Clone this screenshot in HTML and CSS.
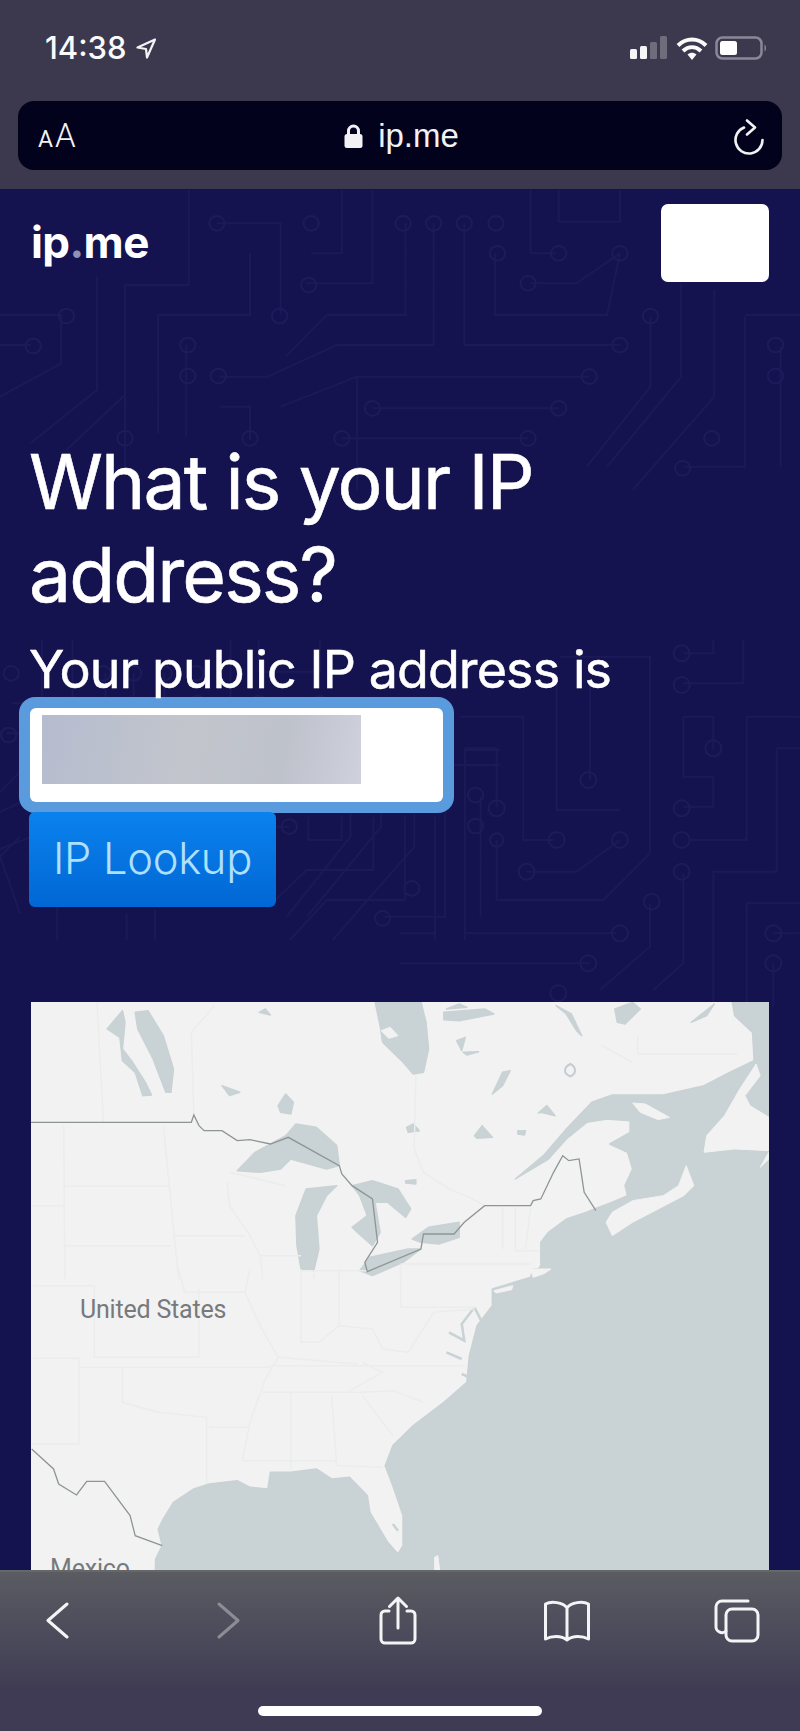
FILE: index.html
```html
<!DOCTYPE html>
<html lang="en">
<head>
<meta charset="utf-8">
<title>ip.me</title>
<link rel="stylesheet" href="styles.css">
</head>
<body>
<div class="phone">
  <header class="chrome">
    <div class="status">
      <div class="clock"><span>14:38</span>
        <svg class="loc" width="20" height="21" viewBox="0 0 20 21"><path d="M19 1.500 1.500 9.500 10 11 11 19.500Z"/></svg>
      </div>
      <div class="indicators">
        <svg width="38" height="24" viewBox="0 0 38 24"><rect class="bar-on" x="0" y="13" width="7" height="10" rx="1.500"/><rect class="bar-on" x="10" y="10" width="7" height="13" rx="1.500"/><rect class="bar-off" x="20" y="6" width="7" height="17" rx="1.500"/><rect class="bar-off" x="30" y="0" width="7" height="23" rx="1.500"/></svg>
        <svg width="32" height="25" viewBox="0 0 32 25"><path class="wifi" d="M2 9.500C10 1.500 22 1.500 30 9.500"/><path class="wifi" d="M7 15C12.500 10 19.500 10 25 15"/><path class="wifi-dot" d="M11.500 18.500C14.500 16 17.500 16 20.500 18.500L16 24Z"/></svg>
        <svg width="52" height="24" viewBox="0 0 52 24"><rect class="batt" x="1.500" y="1.500" width="45" height="21" rx="6"/><rect class="batt-fill" x="5" y="5" width="17" height="14" rx="2.500"/><path class="batt-cap" d="M49.500 8.500C51.500 9.500 51.500 14.500 49.500 15.500Z"/></svg>
      </div>
    </div>
    <div class="urlbar">
      <div class="aa"><span class="aa-small">A</span><span class="aa-big">A</span></div>
      <div class="address">
        <svg width="19" height="24" viewBox="0 0 19 24"><path class="lock-shackle" d="M4.500 11V7A5 5 0 0 1 14.500 7V11"/><rect class="lock-body" x="0.500" y="10" width="18" height="14" rx="2.500"/></svg>
        <span>ip.me</span>
      </div>
      <svg class="reload" width="32" height="36" viewBox="0 0 32 36"><path d="M11 8.500A13.500 13.500 0 1 0 29.500 21"/><path d="M14 1.500 22 8.500 14 15.500"/></svg>
    </div>
  </header>

  <main class="page">
    <svg class="circuit" width="800" height="1381" viewBox="0 189 800 1381" aria-hidden="true">
      <defs>
        <g id="tile" transform="translate(0 190) scale(.5102 .3333)">
          <path class="trace" d="M245 850V285H370V0M310 730V375H490V190M425 100H550V375M610 190H670V0M600 280H730V0M640 375H795V100M525 560H430M525 560 660 465H850V100M640 375 560 500M910 100V465H1215M970 190V375H1190L1215 190M1040 280H1130L1215 190M1090 190H1040V0M1095 0V95H1215V0M700 560H1155M550 650 700 560V900M730 655H1095M670 745H1035M1150 830 1275 590V380M1335 280V560L1190 830M1400 300V620L1240 900M1460 380V830H1340M1460 375H1568M1530 470V830M0 375H120V520L0 620M60 465H0M190 260V600L60 760M365 465V740M245 615 130 780M430 650H490V750"/>
          <g class="pad">
            <ellipse cx="425" cy="100" rx="15" ry="22"/><ellipse cx="610" cy="100" rx="15" ry="22"/><ellipse cx="790" cy="100" rx="15" ry="22"/><ellipse cx="850" cy="100" rx="15" ry="22"/><ellipse cx="910" cy="100" rx="15" ry="22"/><ellipse cx="972" cy="100" rx="15" ry="22"/><ellipse cx="975" cy="190" rx="15" ry="22"/><ellipse cx="1095" cy="190" rx="15" ry="22"/><ellipse cx="1215" cy="190" rx="15" ry="22"/><ellipse cx="1035" cy="280" rx="15" ry="22"/><ellipse cx="605" cy="285" rx="15" ry="22"/><ellipse cx="548" cy="378" rx="15" ry="22"/><ellipse cx="130" cy="378" rx="15" ry="22"/><ellipse cx="65" cy="468" rx="15" ry="22"/><ellipse cx="368" cy="465" rx="15" ry="22"/><ellipse cx="368" cy="558" rx="15" ry="22"/><ellipse cx="428" cy="558" rx="15" ry="22"/><ellipse cx="1215" cy="465" rx="15" ry="22"/><ellipse cx="1275" cy="378" rx="15" ry="22"/><ellipse cx="1155" cy="560" rx="15" ry="22"/><ellipse cx="1520" cy="465" rx="15" ry="22"/><ellipse cx="1520" cy="558" rx="15" ry="22"/><ellipse cx="730" cy="655" rx="15" ry="22"/><ellipse cx="1095" cy="655" rx="15" ry="22"/><ellipse cx="670" cy="745" rx="15" ry="22"/><ellipse cx="1035" cy="745" rx="15" ry="22"/><ellipse cx="490" cy="745" rx="15" ry="22"/><ellipse cx="245" cy="745" rx="15" ry="22"/><ellipse cx="1395" cy="745" rx="15" ry="22"/><ellipse cx="1338" cy="835" rx="15" ry="22"/>
          </g>
        </g>
      </defs>
      <use href="#tile"/>
      <use href="#tile" x="-300" y="450"/>
      <g transform="translate(400 640) scale(.3333)">
        <path class="trace" d="M470 130V510H660M570 130V420M180 230H370V600H460M195 880V325H290V500M290 600V780H610L750 640V50H480M380 695H530L660 600M850 230H940V330M850 230V410H940V500H850M1040 230V600H870M1200 230H1040M1130 325H1200M1130 325V695H940V1100M1200 790H1040V1100M850 700V970L760 1050M750 790V920L600 1050M195 880H650M0 880H105V540M0 970H570M850 130H1030V0M850 40H940V0M1120 880H1200M1120 970V1100"/>
        <g class="pad"><circle cx="565" cy="420" r="24"/><circle cx="290" cy="505" r="24"/><circle cx="290" cy="600" r="20"/><circle cx="470" cy="600" r="24"/><circle cx="660" cy="600" r="24"/><circle cx="380" cy="695" r="24"/><circle cx="845" cy="505" r="24"/><circle cx="845" cy="600" r="24"/><circle cx="845" cy="695" r="24"/><circle cx="755" cy="785" r="24"/><circle cx="660" cy="880" r="24"/><circle cx="565" cy="970" r="24"/><circle cx="475" cy="1060" r="24"/><circle cx="940" cy="325" r="24"/><circle cx="845" cy="40" r="24"/><circle cx="845" cy="135" r="24"/><circle cx="1120" cy="880" r="24"/><circle cx="1120" cy="970" r="24"/></g>
      </g>
      <g transform="translate(0 640) scale(.3333)">
        <path class="trace" d="M60 820 0 650M0 650 60 590M925 530V600H1025V530M1120 530V690H920L800 805M1215 530V780H980L870 900M1305 530V900M1395 330H1500M1395 330V900M465 810V900M380 820V900"/>
      </g>
    </svg>

    <div class="page-inner">
      <div class="topbar">
        <div class="logo">ip<span class="logo-dot">.</span>me</div>
        <div class="menu-btn"></div>
      </div>
      <h1 class="title">What is your IP address?</h1>
      <p class="subtitle">Your public IP address is</p>
      <div class="ip-field"><div class="ip-blur"></div></div>
      <div class="lookup">IP Lookup</div>

      <svg class="map" width="738" height="600" viewBox="31 1003 738 600">
        <g class="map-shapes">
        <g transform="translate(0 990) scale(.5102 .3333)">
          <path class="water" d="M1040 870 1060 830 1060 760 1075 730 1110 690 1150 670 1165 660 1200 640 1230 620 1225 590 1240 540 1230 490 1195 465 1235 430 1235 395 1190 390 1150 400 1110 450 1075 510 1010 570 1065 500 1110 420 1160 340 1200 318 1300 318 1380 290 1430 250 1478 215 1475 130 1440 80 1435 38 1507 38 1507 870Z"/>
          <path class="land" d="M1482 225 1450 300 1420 380 1385 440 1380 490 1440 480 1507 485 1507 385 1470 350 1460 320 1490 260ZM1188 700 1200 670 1240 635 1300 620 1330 590 1345 530 1360 590 1340 620 1290 660 1240 700 1200 740ZM1240 342 1265 345 1312 385 1290 392 1255 370ZM1507 490 1490 535 1507 510Z"/>
          <path class="water" d="M265 70 290 65 320 140 340 240 335 310 325 310 300 210 270 120ZM210 120 240 65 245 100 240 180 260 220 285 280 297 318 280 320 265 250 240 215 235 145ZM735 38H825L835 100 840 180 830 250 810 255 790 220 750 160 745 110ZM870 70 950 60 968 75 900 95 870 92ZM1205 60 1240 40 1255 60 1225 105 1210 100ZM1355 100 1400 45 1385 80ZM965 315 985 250 1000 245 985 290ZM545 350 560 315 575 340 570 375 550 370ZM435 290 470 310 450 320ZM465 545 500 490 560 440 580 405 620 415 660 470 665 530 640 540 570 510 550 540 510 550ZM580 680 600 600 660 590 640 620 620 680 625 780 615 845 590 840 582 770ZM690 590 730 575 780 600 805 660 795 685 760 640 735 640 745 730 730 770 700 730 690 715 720 680 705 620ZM705 845 725 805 800 780 825 780 790 820 730 860ZM808 750 840 715 900 700 900 745 860 765 825 760ZM795 575 815 572 815 585 795 582ZM797 415 810 405 822 425 800 430ZM930 440 945 410 965 445 935 448ZM1015 425 1030 425 1028 438 1015 435ZM1055 372 1072 350 1088 380 1060 370ZM508 70 520 60 530 78ZM895 155 912 145 905 185ZM908 190 938 188 915 198ZM1090 50 1120 75 1140 140 1130 125 1110 75ZM875 60 900 45 915 55Z"/>
          <path class="land" d="M747 125 765 115 780 140 762 148Z"/>
          <path class="lake-ring" d="M1118 225C1130 235 1130 255 1118 262 1104 255 1104 235 1118 225Z"/>
          <path class="state" d="M190 38 203 400M375 130 380 378M420 50 375 130M125 410 127 870M320 410 350 870M125 592H332M60 650H125M125 770H335M340 740H480M445 580 450 650 490 740 510 800 515 870M510 800H590M590 845H720M615 850V870M665 850V870M785 825V870M785 825H1040M985 655V780M1010 655V785H1055M1040 655 1030 780M815 260 812 480 830 550 880 600 920 625 950 650M1180 170 1240 220M1250 140V195H1445M450 550 560 590"/>
          <path class="border" d="M60 400H375L380 378 390 410 400 425 435 425 465 455 490 452 530 465 565 445 665 530 670 555 690 590 730 630 740 760 715 820 720 848 825 780 830 735 890 735 910 700 950 650H1040L1045 635 1060 630 1085 550 1103 500 1115 515 1135 510 1145 610 1168 665"/>
        </g>
        <g transform="translate(0 1270) scale(.5102 .3333)">
          <path class="water" d="M1045 0 1040 25 965 60 965 110 935 170 920 260 915 340 870 400 810 470 770 530 755 590 770 650 790 740 790 830 780 855 760 820 725 730 720 680 685 625 650 630 620 600 570 610 530 610 525 660 490 655 465 635 410 645 380 660 340 700 320 750 310 780 318 830 305 870 303 1000H1507V0Z"/>
          <path class="land" d="M968 65 1005 50 1003 62 972 72ZM852 865 858 860 862 905 852 905ZM1040 0H1080L1065 15 1045 25Z"/>
          <path class="inlet" d="M930 115 905 165 910 215 880 190M930 115 945 160M875 250 905 270M905 315 920 325M770 765 780 785"/>
          <path class="state" d="M65 50H185V265H390V60M350 0 362 70H480M65 268H155V525H62M155 295H240V400L310 430 405 445V645M240 295H390M390 295H530M530 290H910M490 0 480 70 510 170 545 265 520 330 490 460 475 575H660M410 475H490M515 370H710L770 365 830 400M570 370V600M650 380 660 590 750 595M590 0V220H625L665 170 730 180 750 240 800 250 850 130M665 0V170M785 0V115H935M710 280 750 310 680 370M710 380 770 500M545 265 700 285M850 130 930 120"/>
          <path class="border" d="M62 540 105 600 115 645 150 678 170 637H205L255 740 265 800 318 830"/>
        </g>
        </g>
        <text class="map-label" x="80" y="1319">United States</text>
        <text class="map-label" x="50" y="1578">Mexico</text>
      </svg>
    </div>
  </main>

  <footer class="toolbar">
    <div class="tools">
      <div class="tool"><svg width="24" height="38" viewBox="0 0 24 38"><path class="ic" d="M21 2 2 18.500 21 35"/></svg></div>
      <div class="tool"><svg width="24" height="38" viewBox="0 0 24 38"><path class="ic ic-dim" d="M3 2 22 18.500 3 35"/></svg></div>
      <div class="tool"><svg width="38" height="50" viewBox="0 0 38 50"><path class="ic" d="M10 15H6A4 4 0 0 0 2 19V43A4 4 0 0 0 6 47H32A4 4 0 0 0 36 43V19A4 4 0 0 0 32 15H28M19 32V3M10.500 10.500 19 2 27.500 10.500"/></svg></div>
      <div class="tool"><svg width="48" height="42" viewBox="0 0 48 42"><path class="ic" d="M24 8C20 2 8 1 2.500 4V39C8 36 18 35 24 40 30 35 40 36 45.500 39V4C40 1 28 2 24 8ZM24 8V40"/></svg></div>
      <div class="tool"><svg width="46" height="44" viewBox="0 0 46 44"><path class="ic" d="M34 2H8A6 6 0 0 0 2 8V27A6 6 0 0 0 12 32"/><rect class="ic" x="12" y="10" width="32" height="32" rx="6"/></svg></div>
    </div>
    <div class="home"></div>
  </footer>
</div>
</body>
</html>
```

FILE: styles.css
```css
* { box-sizing: border-box; }
html, body { margin: 0; padding: 0; background: #14134f; }
body { font-family: Inter, "Liberation Sans", sans-serif; color: #fff; }

.phone { width: 800px; height: 1731px; display: flex; flex-direction: column; overflow: hidden; }

/* browser top chrome */
.chrome { height: 189px; flex: none; background: #3c394f; padding: 0 18px; }
.status { height: 100px; display: flex; justify-content: space-between; align-items: flex-start; padding: 35px 15px 0 27px; }
.clock { display: flex; align-items: center; gap: 9px; font-size: 31px; font-weight: 500; line-height: 26px; color: #fafafa; }
.loc { fill: none; stroke: #f4f4f6; stroke-width: 2.2; stroke-linejoin: round; }
.indicators { display: flex; align-items: flex-start; gap: 7.500px; margin-top: 1px; }
.bar-on { fill: #f5f5f7; }
.bar-off { fill: #6f6d7c; }
.wifi { fill: none; stroke: #fafafa; stroke-width: 4; }
.wifi-dot { fill: #fafafa; }
.batt { fill: none; stroke: #8a8896; stroke-width: 2.500; }
.batt-fill { fill: #fff; }
.batt-cap { fill: #8a8896; }

.urlbar { height: 69px; margin-top: 1px; background: #03021c; border-radius: 16px; display: grid; grid-template-columns: 1fr auto 1fr; align-items: center; padding: 0 17px 0 20px; color: #f2f2f4; }
.aa { display: flex; align-items: baseline; gap: 2px; font-family: Roboto, sans-serif; }
.aa-small { font-size: 23px; font-weight: 400; }
.aa-big { font-size: 33px; font-weight: 300; }
.address { display: flex; align-items: center; gap: 15px; font-size: 33px; font-family: "Liberation Sans", sans-serif; line-height: 40px; }
.lock-shackle { fill: none; stroke: #f2f2f4; stroke-width: 3; }
.lock-body { fill: #f2f2f4; }
.reload { justify-self: end; fill: none; stroke: #f2f2f4; stroke-width: 2.600; stroke-linecap: round; stroke-linejoin: round; margin-top: 3px; }

/* page */
.page { flex: 1; min-height: 0; position: relative; overflow: hidden; background: #14134f; }
.circuit { position: absolute; left: 0; top: 0; display: block; }
.trace { fill: none; stroke: #1b1a58; stroke-width: 2; vector-effect: non-scaling-stroke; }
.pad { fill: none; stroke: #1d1c5a; stroke-width: 2; }
.pad * { vector-effect: non-scaling-stroke; }
.page-inner { position: relative; padding: 15px 31px 0; }

.topbar { display: flex; justify-content: space-between; align-items: center; height: 78px; }
.logo { font-size: 44px; font-weight: 700; line-height: 78px; letter-spacing: -.6px; margin-top: -2px; }
.logo-dot { color: #8d93b5; }
.menu-btn { width: 108px; height: 78px; background: #fff; border-radius: 7px; }

.title { margin: 153px 0 0 -2px; width: 640px; font-size: 75px; font-weight: 400; line-height: 93px; letter-spacing: -1.9px; -webkit-text-stroke: .6px #fff; }
.subtitle { margin: 20px 0 0 -2px; font-size: 52px; line-height: 58px; font-weight: 400; letter-spacing: -.9px; -webkit-text-stroke: .5px #fff; }

.ip-field { width: 413px; height: 94px; margin: 9px 0 0 -1px; background: #fff; border-radius: 6px; box-shadow: 0 0 0 11px #5a9bdd; padding: 7px 0 0 12px; }
.ip-blur { width: 319px; height: 69px; background: linear-gradient(100deg, #b5bccf, #c2c5cc 45%, #bec2cb 75%, #cfd1dc); filter: blur(.5px); }

.lookup { position: relative; width: 247px; height: 95px; margin: 10px 0 0 -2px; border-radius: 6px; background: linear-gradient(#0a82ee, #0167d4); color: #aee0ff; font-size: 43.500px; font-weight: 300; line-height: 92px; text-align: center; letter-spacing: -.3px; }

.map { display: block; margin-top: 95px; background: #f2f2f2; }
.map-shapes { filter: blur(.6px); }
.water { fill: #c9d2d4; stroke: #c9d2d4; stroke-width: 1.500; stroke-linejoin: round; vector-effect: non-scaling-stroke; }
.land { fill: #f2f2f2; stroke: #f2f2f2; stroke-width: 1; stroke-linejoin: round; vector-effect: non-scaling-stroke; }
.lake-ring { fill: none; stroke: #c4cccf; stroke-width: 2; vector-effect: non-scaling-stroke; }
.inlet { fill: none; stroke: #c9d2d4; stroke-width: 2.500; vector-effect: non-scaling-stroke; }
.state { fill: none; stroke: #ebecec; stroke-width: 1.500; vector-effect: non-scaling-stroke; }
.border { fill: none; stroke: #8e9596; stroke-width: 1.300; vector-effect: non-scaling-stroke; }
.map-label { font-family: Roboto, sans-serif; font-size: 25px; fill: #77797b; letter-spacing: -.2px; }

/* bottom toolbar */
.toolbar { height: 161px; flex: none; background: linear-gradient(#5a5c62, #3f3b54 75%); border-top: 2px solid #65686b; }
.tools { display: flex; justify-content: space-between; padding: 19px 33px 0 28px; }
.tool { width: 60px; height: 60px; display: flex; align-items: center; justify-content: center; }
.ic { fill: none; stroke: #f4f4f6; stroke-width: 3; stroke-linecap: round; stroke-linejoin: round; }
.ic-dim { stroke: #8c8c94; }
.home { width: 284px; height: 10px; margin: 55px auto 0; background: #fff; border-radius: 5px; }
```
